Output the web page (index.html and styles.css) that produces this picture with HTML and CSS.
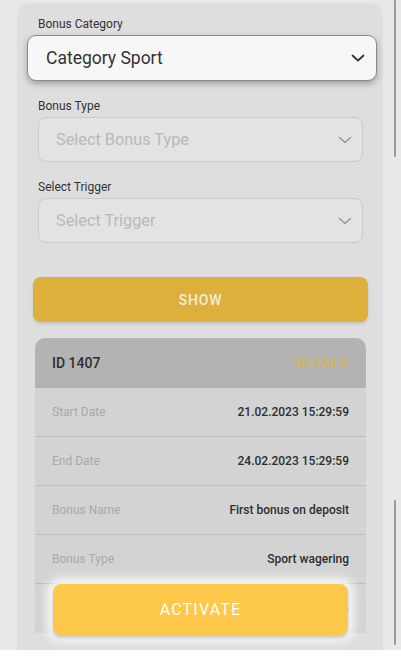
FILE: index.html
```html
<!DOCTYPE html>
<html>
<head>
<meta charset="utf-8">
<link rel="stylesheet" href="styles.css">
</head>
<body>
<div class="page">
  <div class="panel">
    <div class="label label-first">Bonus Category</div>
    <div class="select select-active">
      <span>Category Sport</span>
      <svg class="chev" width="14" height="8" viewBox="0 0 14 8"><path d="M1.5 1.5 L7 6.5 L12.5 1.5" fill="none" stroke="#333" stroke-width="1.8" stroke-linecap="round" stroke-linejoin="round"/></svg>
    </div>
    <div class="label">Bonus Type</div>
    <div class="select">
      <span>Select Bonus Type</span>
      <svg class="chev" width="14" height="8" viewBox="0 0 14 8"><path d="M1.5 1.5 L7 6.5 L12.5 1.5" fill="none" stroke="#9a9a9a" stroke-width="1.6" stroke-linecap="round" stroke-linejoin="round"/></svg>
    </div>
    <div class="label">Select Trigger</div>
    <div class="select">
      <span>Select Trigger</span>
      <svg class="chev" width="14" height="8" viewBox="0 0 14 8"><path d="M1.5 1.5 L7 6.5 L12.5 1.5" fill="none" stroke="#9a9a9a" stroke-width="1.6" stroke-linecap="round" stroke-linejoin="round"/></svg>
    </div>
    <div class="show-btn">SHOW</div>
    <div class="card">
      <div class="card-head">
        <span class="card-id">ID 1407</span>
        <span class="card-details">DETAILS</span>
      </div>
      <div class="row"><span class="k">Start Date</span><span class="v">21.02.2023 15:29:59</span></div>
      <div class="row"><span class="k">End Date</span><span class="v">24.02.2023 15:29:59</span></div>
      <div class="row"><span class="k">Bonus Name</span><span class="v">First bonus on deposit</span></div>
      <div class="row"><span class="k">Bonus Type</span><span class="v">Sport wagering</span></div>
      <div class="row row-last"><span class="k">Status</span><span class="v">Active</span></div>
    </div>
  </div>
  <div class="activate">ACTIVATE</div>
  <div class="scroll scroll-a"></div>
  <div class="scroll scroll-b"></div>
</div>
</body>
</html>
```
FILE: styles.css
```css
html { background: #ffffff; }
body {
  margin: 0;
  font-family: Roboto, "Liberation Sans", sans-serif;
}
.page {
  position: relative;
  height: 650px;
  overflow: hidden;
  background: #e8e8e8;
  padding-top: 3px;
  box-sizing: border-box;
}
.panel {
  margin-left: 17px;
  width: 366px;
  height: 700px;
  background: #dedede;
  border-radius: 13px 13px 0 0;
  display: flex;
  flex-direction: column;
  box-sizing: border-box;
  padding-top: 14px;
}
.label {
  font-size: 12px;
  line-height: 14px;
  font-weight: 400;
  color: #333;
  margin-left: 21px;
  margin-top: 18px;
  margin-bottom: 4px;
}
.label-first { margin-top: 0; margin-bottom: 4px; }
.select {
  margin-left: 21px;
  width: 325px;
  height: 45px;
  box-sizing: border-box;
  border: 1px solid #cbcbcb;
  border-radius: 8px;
  background: #e3e3e3;
  display: flex;
  align-items: center;
  justify-content: space-between;
  padding: 0 10px 0 17px;
  font-size: 16.3px;
  color: #b9b9b9;
}
.select-active {
  margin-left: 10px;
  width: 350px;
  height: 46px;
  border: 1px solid #8a8a8a;
  border-radius: 9px;
  background: #f7f7f7;
  box-shadow: 0 3px 6px rgba(0,0,0,0.28);
  font-size: 17.5px;
  color: #333;
  padding: 0 11px 0 18px;
  margin-bottom: 0;
}
.chev { display: block; }
.show-btn {
  margin-left: 16px;
  margin-top: 34px;
  width: 335px;
  height: 45px;
  border-radius: 8px;
  background: #ddaf3b;
  box-shadow: 0 2px 3px rgba(0,0,0,0.12);
  color: #f1ede0;
  font-size: 14px;
  font-weight: 500;
  letter-spacing: 0.8px;
  display: flex;
  align-items: center;
  justify-content: center;
}
.card {
  margin-left: 18px;
  margin-top: 16px;
  width: 331px;
  border-radius: 10px 10px 0 0;
  background: #d3d3d3;
  overflow: hidden;
}
.card-head {
  height: 50px;
  background: #b3b3b3;
  display: flex;
  align-items: center;
  justify-content: space-between;
  padding: 0 17px;
}
.card-id {
  font-size: 14px;
  font-weight: 500;
  color: #2e2e2e;
}
.card-details {
  font-size: 14px;
  font-weight: 400;
  color: #d6b446;
}
.row {
  height: 49px;
  box-sizing: border-box;
  border-bottom: 1px solid #bdbdbd;
  display: flex;
  align-items: center;
  justify-content: space-between;
  padding: 0 17px;
  font-size: 12px;
}
.row-last { border-bottom: none; }
.k { color: #a8a8a8; }
.v { color: #2e2e2e; font-weight: 500; }
.activate {
  position: absolute;
  left: 53px;
  top: 584px;
  width: 295px;
  height: 51px;
  border-radius: 8px;
  background: #fec84a;
  color: #ffffff;
  font-size: 16px;
  font-weight: 400;
  letter-spacing: 1.2px;
  display: flex;
  align-items: center;
  justify-content: center;
  box-shadow: 0 3px 3px rgba(0,0,0,0.18), 0 0 10px 6px rgba(255,255,255,0.85);
}
.scroll {
  position: absolute;
  left: 394px;
  width: 2px;
  background: #9c9c9c;
  border-radius: 1px;
}
.scroll-a { top: 0; height: 157px; }
.scroll-b { top: 500px; height: 145px; }
```
